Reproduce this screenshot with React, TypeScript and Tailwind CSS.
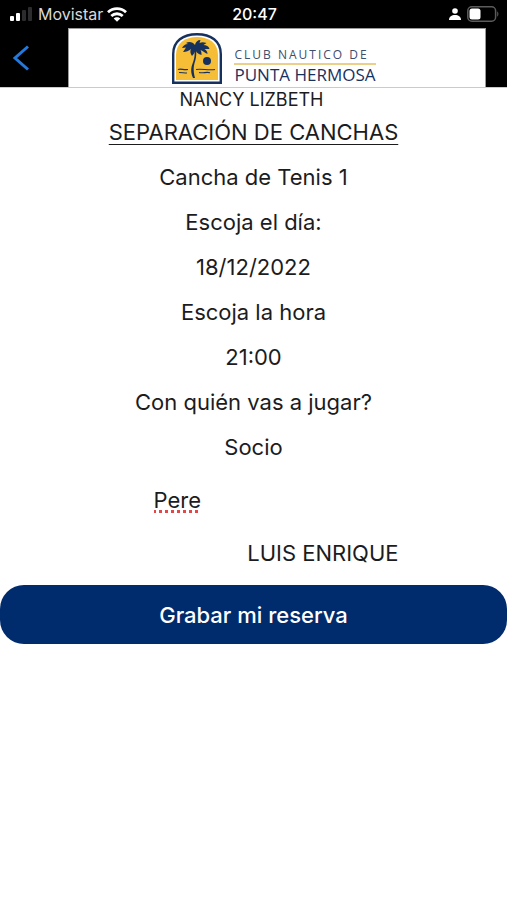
import React, { useState } from 'react';

const SignalIcon: React.FC = () => (
  <svg width="24" height="14" viewBox="0 0 24 14" aria-hidden="true">
    <rect x="0" y="9" width="4" height="5" rx="1" fill="#fff" />
    <rect x="6" y="6" width="4" height="8" rx="1" fill="#fff" />
    <rect x="12" y="3" width="4" height="11" rx="1" fill="#2c2c2e" />
    <rect x="18" y="0" width="4" height="14" rx="1" fill="#2c2c2e" />
  </svg>
);

const WifiIcon: React.FC = () => (
  <svg width="20" height="15" viewBox="0 0 20 15" fill="none" stroke="#fff" strokeWidth="2.8" aria-hidden="true">
    <path d="M1 5.2C6 .4 14 .4 19 5.2" />
    <path d="M4.3 9c3.2-3 8.2-3 11.4 0" />
    <path d="M10 14.8 6.7 11.5c1.7-1.7 4.9-1.7 6.6 0z" fill="#fff" stroke="none" />
  </svg>
);

const PersonIcon: React.FC = () => (
  <svg width="12" height="12" viewBox="0 0 12 12" fill="#fff" aria-hidden="true">
    <circle cx="6" cy="3" r="2.8" />
    <path d="M0 12c0-3.4 2.6-5 6-5s6 1.6 6 5z" />
  </svg>
);

const BatteryIcon: React.FC = () => (
  <svg width="32" height="16" viewBox="0 0 32 16" aria-hidden="true">
    <rect x="0.8" y="0.8" width="27.8" height="14.4" rx="4" fill="none" stroke="#5c5c5f" strokeWidth="1.5" />
    <rect x="2.5" y="2.5" width="11" height="11" rx="2.5" fill="#fff" />
    <path d="M30.2 5.5c1.6.5 1.6 4.5 0 5z" fill="#5c5c5f" />
  </svg>
);

const ClubLogo: React.FC = () => (
  <svg width="50" height="51" viewBox="0 0 50 51" aria-hidden="true">
    <path d="M1.2 49.8V21C1.2 8 11 1.2 25 1.2S48.8 8 48.8 21v28.8z" fill="#fff" stroke="#17315f" strokeWidth="2.4" />
    <path d="M4 47V22C4 10 13 4 25 4s21 6 21 18v25z" fill="#f6be36" />
    {/* trunk */}
    <path d="M22 16c2 7-1 13-2.500 18-.8 4-.2 7 1.500 11h2c-2-8-1.500-12 .2-17 1.200-4 1.300-8 .8-13z" fill="#17315f" />
    {/* leaves */}
    <path
      d="M23 12c-2-3-6-4-9-2l2 1c-3 0-5 2-6 4l4-.5-3 4.500c3 0 6-1 8-3-1 2-1 4 1 7 2-2 3-4 3.500-6 1 3 3 4 6 5 0-2 0-3-1-5 3 1 4 3 7 4 0-2-1-4-3-5l5 0c-1-3-3-4-6-4l3-2c-3-1-5-1-7 0l1-3c-3 0-5 2-5.500 5z"
      fill="#17315f"
    />
    <circle cx="35" cy="28" r="4" fill="#17315f" />
    {/* horizon and sand */}
    <path d="M6 36.500c3-1 5 .5 10 0M7 39.500c3 0 5 .5 8 .5M24 36.500c6-1 12 1 19 0M27 39.500c4 1 8-1 11 .3" fill="none" stroke="#17315f" strokeWidth="1.2" />
  </svg>
);

const fieldClass =
  'block w-full h-[45px] appearance-none bg-transparent p-0 text-center text-[22px] leading-7 text-[#1c1c1e] outline-none';
const labelClass = 'flex h-[45px] items-center justify-center text-[22px] leading-7';

const App: React.FC = () => {
  const [court, setCourt] = useState('Cancha de Tenis 1');
  const [day, setDay] = useState('18/12/2022');
  const [hour, setHour] = useState('21:00');
  const [partner, setPartner] = useState('Socio');
  const [search, setSearch] = useState('Pere');

  return (
    <div className="min-h-screen bg-white font-['Inter',sans-serif] text-[#1c1c1e]">
      {/* Status bar */}
      <div className="grid h-7 grid-cols-3 items-center bg-black pl-2.5 pr-2 text-base text-white">
        <div className="flex items-center gap-1">
          <SignalIcon />
          <span className="text-[#d8d8d8]">Movistar</span>
          <WifiIcon />
        </div>
        <span className="text-center font-medium">20:47</span>
        <div className="flex items-center justify-end gap-1.5">
          <PersonIcon />
          <BatteryIcon />
        </div>
      </div>

      {/* Header */}
      <header className="flex h-[60px] border-b border-[#c9cccc] bg-black pr-[21px]">
        <button type="button" aria-label="Volver" className="flex w-[68px] items-center pl-3">
          <svg width="18" height="26" viewBox="0 0 18 26" fill="none" stroke="#2479dc" strokeWidth="3" aria-hidden="true">
            <path d="M16 1.5 3 13l13 11.5" />
          </svg>
        </button>
        <div className="flex flex-1 items-center justify-center gap-3 border-x border-t border-[#9a9a9a] bg-white pr-1.5">
          <ClubLogo />
          <div className="pt-4 font-['Open_Sans',sans-serif] text-[#17315f]">
            <div className="border-b-2 border-[#ecd08a] text-xs leading-4 tracking-[2px] text-[#3d4d6b]">CLUB NAUTICO DE</div>
            <div className="text-[17px] leading-5">PUNTA HERMOSA</div>
          </div>
        </div>
      </header>

      <form onSubmit={(e) => e.preventDefault()}>
        <p className="pr-1 text-center text-lg leading-6">NANCY LIZBETH</p>
        <h1 className="pt-1.5 text-center text-[22px] leading-7 underline decoration-1 underline-offset-4">
          SEPARACIÓN DE CANCHAS
        </h1>

        <div className="pt-2">
          <select aria-label="Cancha" className={fieldClass} value={court} onChange={(e) => setCourt(e.target.value)}>
            <option>Cancha de Tenis 1</option>
          </select>
          <label htmlFor="day" className={labelClass}>
            Escoja el día:
          </label>
          <input id="day" className={fieldClass} value={day} onChange={(e) => setDay(e.target.value)} />
          <label htmlFor="hour" className={labelClass}>
            Escoja la hora
          </label>
          <input id="hour" className={fieldClass} value={hour} onChange={(e) => setHour(e.target.value)} />
          <label htmlFor="partner" className={labelClass}>
            Con quién vas a jugar?
          </label>
          <select id="partner" className={fieldClass} value={partner} onChange={(e) => setPartner(e.target.value)}>
            <option>Socio</option>
          </select>
        </div>

        <div className="mx-auto w-[200px] pt-2">
          <input
            aria-label="Buscar socio"
            spellCheck={false}
            className="block h-[46px] w-full bg-transparent p-0 text-[22px] leading-7 underline decoration-[#e0484a] decoration-dotted decoration-3 underline-offset-2 outline-none"
            value={search}
            onChange={(e) => setSearch(e.target.value)}
          />
        </div>
        <div className="mx-auto flex w-[290px] justify-end pt-4 pb-[18px] text-[22px] leading-7">LUIS ENRIQUE</div>

        <button type="submit" className="h-[59px] w-full rounded-3xl bg-[#002b6d] text-[22px] font-medium leading-7 text-white">
          Grabar mi reserva
        </button>
      </form>
    </div>
  );
};

export default App;
